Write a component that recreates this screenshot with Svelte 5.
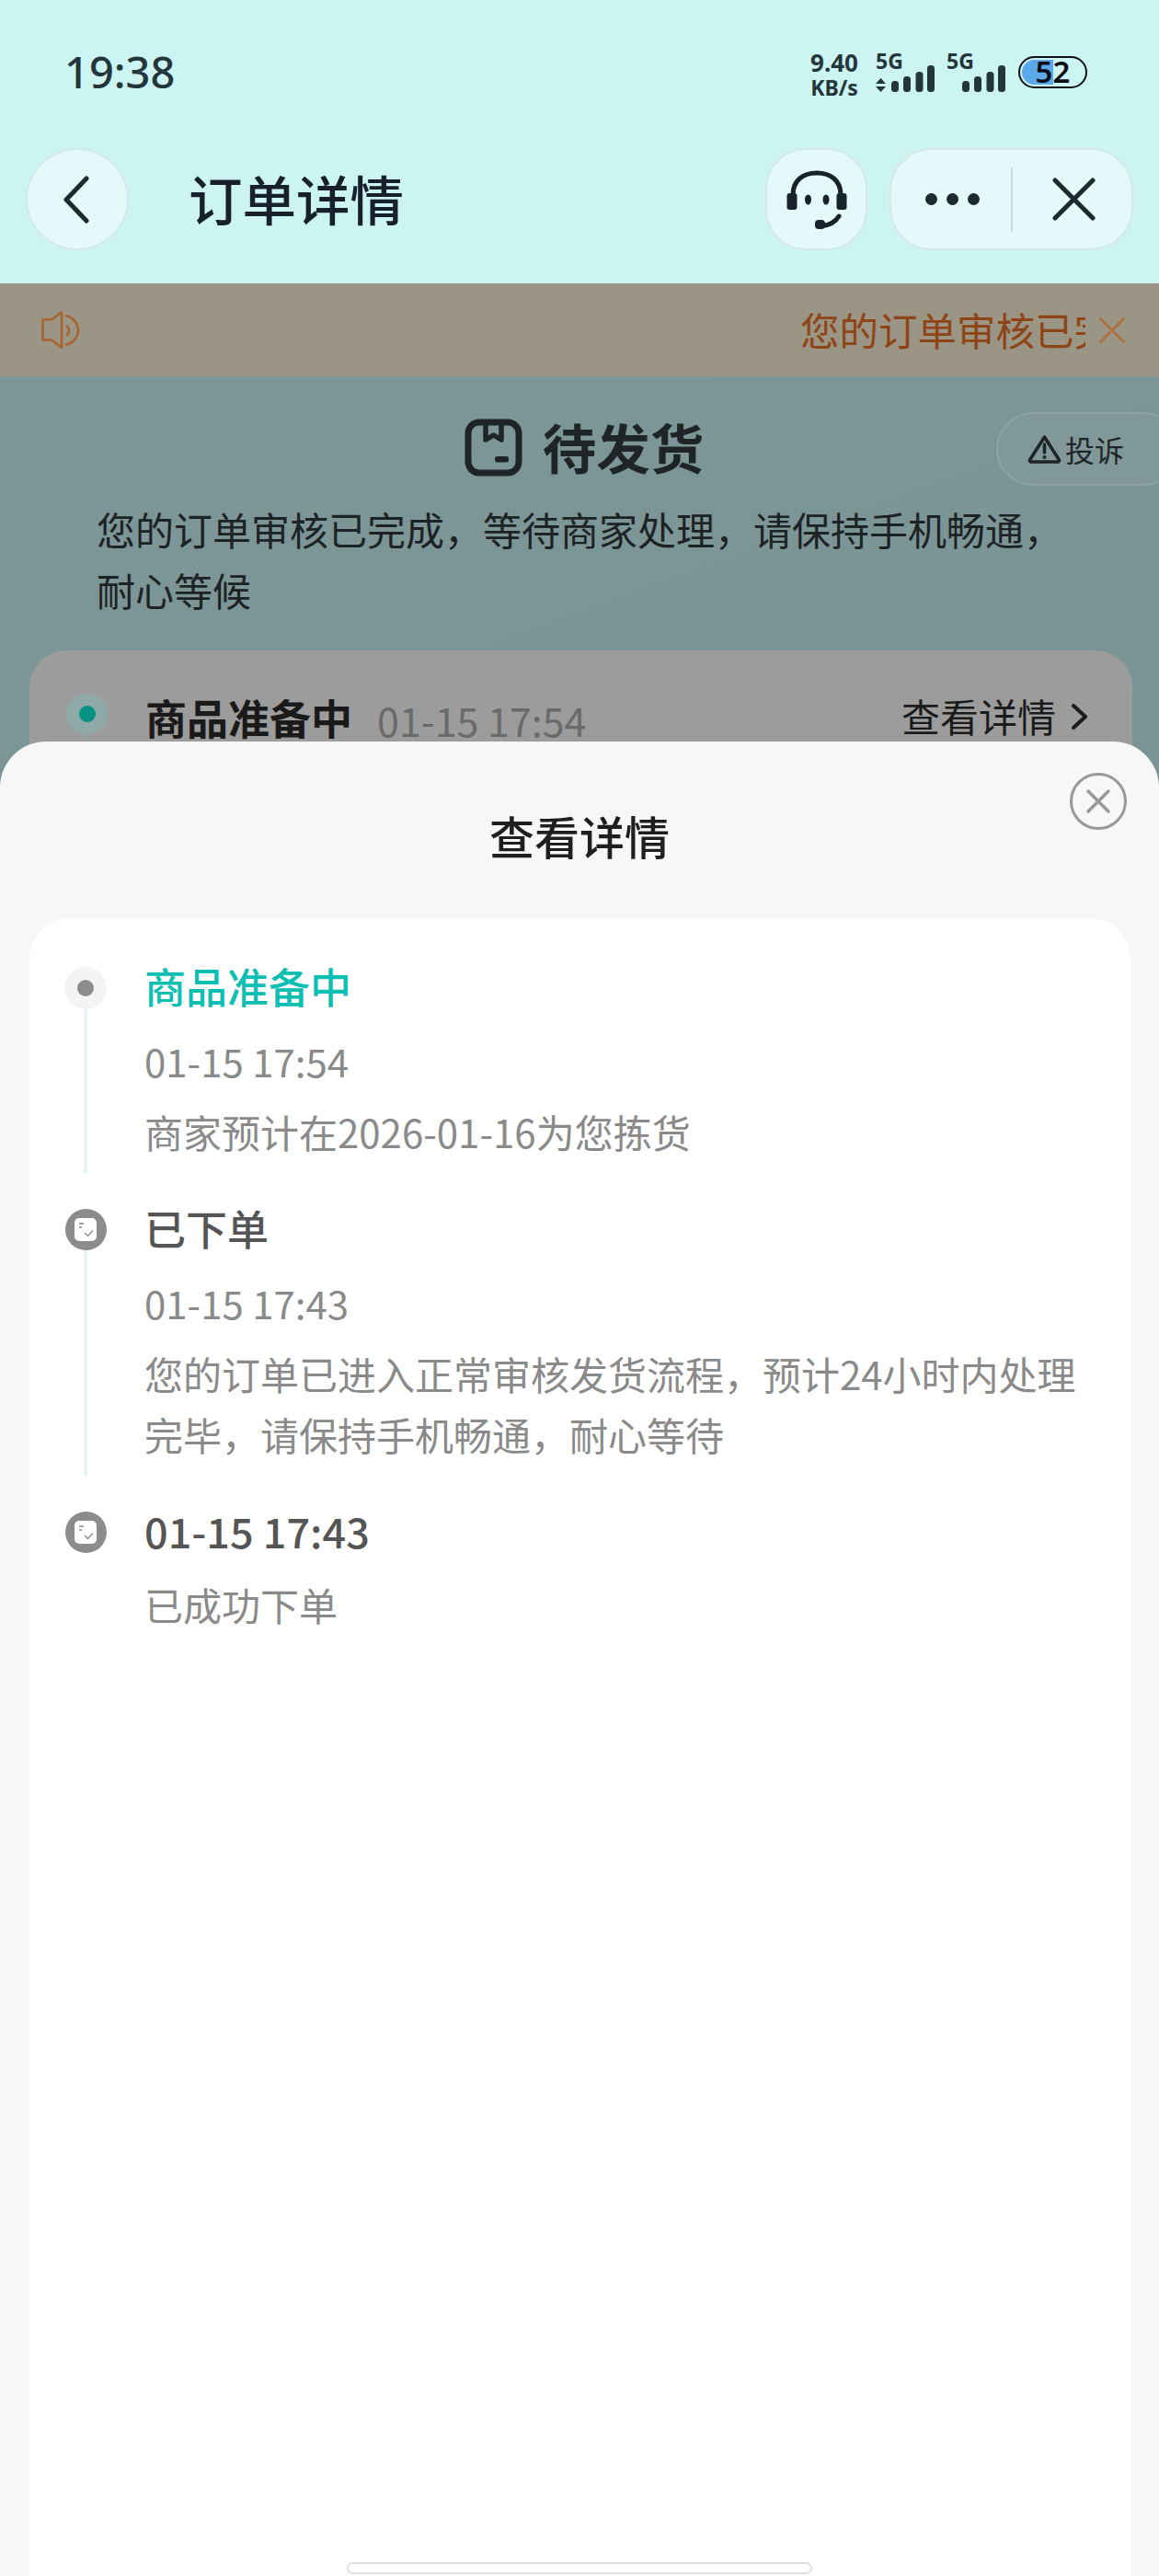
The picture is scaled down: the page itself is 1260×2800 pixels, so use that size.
<script>
  const steps = [
    { kind: 'dot', title: '商品准备中', date: '01-15 17:54', desc: '商家预计在2026-01-16为您拣货' },
    { kind: 'doc', title: '已下单', date: '01-15 17:43', desc: '您的订单已进入正常审核发货流程，预计24小时内处理完毕，请保持手机畅通，耐心等待' },
    { kind: 'doc', title: '01-15 17:43', desc: '已成功下单', last: true }
  ];
</script>

<div class="page">
  <header class="header">
    <div class="status">
      <span class="time">19:38</span>
      <div class="status-right">
        <div class="speed"><span class="speed-num">9.40</span><span class="speed-unit">KB/s</span></div>
        <div class="sim">
          <span class="five">5G</span>
          <svg class="arrows" width="11" height="15" viewBox="0 0 11 15"><path d="M5.5 0L11 6H0zM5.5 15L0 9h11z" fill="#24363a"/></svg>
          <svg class="bars" width="47" height="29" viewBox="0 0 47 29"><rect x="0" y="17" width="8" height="12" rx="3.5"/><rect x="13" y="12" width="8" height="17" rx="3.5"/><rect x="26.500" y="7" width="8" height="22" rx="3.500"/><rect x="39" y="0" width="8" height="29" rx="3.500"/></svg>
        </div>
        <div class="sim second">
          <span class="five">5G</span>
          <svg class="bars" width="47" height="29" viewBox="0 0 47 29"><rect x="0" y="17" width="8" height="12" rx="3.5"/><rect x="13" y="12" width="8" height="17" rx="3.5"/><rect x="26.500" y="7" width="8" height="22" rx="3.500"/><rect x="39" y="0" width="8" height="29" rx="3.500"/></svg>
        </div>
        <div class="battery"><span class="battery-fill"></span><span class="battery-num">52</span></div>
      </div>
    </div>
    <nav class="nav">
      <button class="round back" aria-label="返回">
        <svg width="30" height="52" viewBox="0 0 30 52" fill="none"><path d="M26 3L4 26l22 23" stroke="#1d2a30" stroke-width="5" stroke-linecap="round" stroke-linejoin="round"/></svg>
      </button>
      <h1 class="nav-title">订单详情</h1>
      <button class="round service" aria-label="客服">
        <svg width="66" height="64" viewBox="0 0 66 64" fill="none">
          <path d="M7 27C7 11 18 3 33 3s26 8 26 24" stroke="#18222c" stroke-width="5"/>
          <rect x="0.500" y="25" width="11" height="18" rx="3" fill="#18222c"/>
          <rect x="54.500" y="25" width="11" height="18" rx="3" fill="#18222c"/>
          <ellipse cx="23.500" cy="32" rx="3.500" ry="5.500" fill="#18222c"/>
          <ellipse cx="43" cy="32" rx="3.500" ry="5.500" fill="#18222c"/>
          <path d="M57 50c-4 7-11 10-20 11" stroke="#18222c" stroke-width="5" stroke-linecap="round"/>
          <rect x="31" y="54" width="11" height="10" rx="4" fill="#18222c"/>
        </svg>
      </button>
      <div class="capsule">
        <button class="cap-more" aria-label="更多"><i></i><i></i><i></i></button>
        <span class="cap-div"></span>
        <button class="cap-close" aria-label="关闭">
          <svg width="47" height="47" viewBox="0 0 47 47" fill="none"><path d="M3 3l41 41M44 3L3 44" stroke="#1d2a30" stroke-width="5" stroke-linecap="round"/></svg>
        </button>
      </div>
    </nav>
  </header>

  <div class="banner">
    <svg class="speaker" width="42" height="42" viewBox="0 0 42 42" fill="none" stroke="#a8622d" stroke-width="2.500" stroke-linejoin="round">
      <path d="M22 1.500L11 9.500H1.500v22H11L22 40z"/>
      <path d="M26 5c9 2 14 9 14 16s-5 14-14 16"/>
      <path d="M27 16c4 3 4 8 0 11"/>
    </svg>
    <div class="banner-text">您的订单审核已完成，等待商家处理</div>
    <svg class="banner-x" width="30" height="30" viewBox="0 0 30 30" fill="none"><path d="M1.500 1.500l27 27M28.500 1.500l-27 27" stroke="#ab7141" stroke-width="3"/></svg>
  </div>

  <main class="main">
    <div class="state">
      <svg width="63" height="63" viewBox="0 0 63 63" fill="none">
        <rect x="4" y="4" width="55" height="55" rx="12" stroke="#1f2526" stroke-width="7"/>
        <path d="M23 4v19l8.500-5 8.500 5V4" stroke="#1f2526" stroke-width="5.500" stroke-linejoin="round"/>
        <rect x="33" y="41" width="15" height="6.500" rx="2.500" fill="#1f2526"/>
      </svg>
      <span class="state-text">待发货</span>
    </div>
    <p class="state-desc">您的订单审核已完成，等待商家处理，请保持手机畅通，耐心等候</p>
    <button class="complain">
      <svg width="37" height="32" viewBox="0 0 37 32" fill="none">
        <path d="M18.500 3L34.500 28a1.500 1.500 0 0 1-1 2H3.500a1.500 1.500 0 0 1-1-2z" stroke="#1f2526" stroke-width="3.500" stroke-linejoin="round"/>
        <path d="M18.500 11v9" stroke="#1f2526" stroke-width="3.500" stroke-linecap="round"/>
        <circle cx="18.500" cy="25" r="2" fill="#1f2526"/>
      </svg>
      <span>投诉</span>
    </button>
    <section class="progress">
      <div class="progress-rail"><span class="progress-dot"><i></i></span><span class="progress-line"></span></div>
      <strong class="progress-title">商品准备中</strong>
      <span class="progress-date">01-15 17:54</span>
      <span class="progress-link">查看详情</span>
      <svg width="18" height="28" viewBox="0 0 18 28" fill="none"><path d="M2 2l13 12L2 26" stroke="#1b1b1b" stroke-width="4" stroke-linecap="round" stroke-linejoin="round"/></svg>
    </section>
  </main>

  <aside class="sheet">
    <h2 class="sheet-title">查看详情</h2>
    <button class="sheet-close" aria-label="关闭">
      <svg width="62" height="62" viewBox="0 0 62 62" fill="none">
        <circle cx="31" cy="31" r="29.500" stroke="#999" stroke-width="3"/>
        <path d="M20 20l22 22M42 20L20 42" stroke="#999" stroke-width="3.500" stroke-linecap="round"/>
      </svg>
    </button>
    <div class="timeline">
      {#each steps as s, i}
        <div class="step" class:last={s.last}>
          <div class="rail">
            {#if s.kind === 'dot'}
              <span class="node-dot"><i></i></span>
            {:else}
              <span class="node-doc">
                <svg width="24" height="25" viewBox="0 0 24 25" fill="none">
                  <rect width="24" height="25" rx="5" fill="#fff"/>
                  <path d="M5 6h5M5 10h3" stroke="#8c8c8c" stroke-width="1.500"/>
                  <path d="M11 16l3.500 3.500L20 13.500" stroke="#8c8c8c" stroke-width="1.300"/>
                </svg>
              </span>
            {/if}
            {#if !s.last}<span class="rail-line"></span>{/if}
          </div>
          <div class="step-body">
            <div class="step-title" class:active={i === 0} class:num={s.last}>{s.title}</div>
            {#if s.date}<div class="step-date">{s.date}</div>{/if}
            <div class="step-desc">{s.desc}</div>
          </div>
        </div>
      {/each}
    </div>
  </aside>
  <span class="home"></span>
</div>

<style>
  :global(body) { margin: 0; }
  button { border: 0; background: none; padding: 0; font: inherit; color: inherit; }
  h1, h2, p { margin: 0; }
  .page {
    width: 1260px; height: 2800px; position: relative; overflow: hidden;
    font-family: "Noto Sans CJK SC", "Noto Sans", sans-serif;
    background: linear-gradient(160deg, #7e9799 0%, #7a9394 45%, #738e8f 100%);
  }
  .header { height: 308px; background: #ccf4f3; box-sizing: border-box; padding-top: 52px; }
  .status { display: flex; justify-content: space-between; height: 52px; padding: 0 78px 0 70px; color: #24363a; }
  .time { font-family: "Noto Sans", sans-serif; font-size: 47px; font-weight: 500; line-height: 52px; }
  .status-right { display: flex; align-items: flex-start; padding-top: 2px; }
  .speed { display: flex; flex-direction: column; align-items: center; width: 54px; margin-right: 18px; font-family: "Noto Sans", sans-serif; }
  .speed-num { font-size: 26px; line-height: 28px; font-weight: 700; }
  .speed-unit { font-size: 23px; line-height: 22px; margin-top: 2px; font-weight: 700; }
  .sim { position: relative; width: 64px; height: 46px; margin-right: 13px; }
  .sim.second { margin-right: 14px; }
  .five { position: absolute; left: 0; top: 0; font-family: "Noto Sans", sans-serif; font-size: 23px; font-weight: 700; line-height: 24px; }
  .arrows { position: absolute; left: 0; top: 31px; }
  .bars { position: absolute; right: 0; top: 17px; fill: #24363a; }
  .battery { position: relative; width: 75px; height: 35px; margin-top: 7px; box-sizing: border-box; border: 2.500px solid #111; border-radius: 18px; display: flex; align-items: center; justify-content: center; }
  .battery-fill { position: absolute; left: 2px; top: 2px; bottom: 2px; width: 34px; background: #5aa9ea; border-radius: 14px 0 0 14px; }
  .battery-num { position: relative; font-family: "Noto Sans", sans-serif; font-size: 33px; font-weight: 600; line-height: 1; color: #0c0c14; margin-top: -2px; }
  .nav { display: flex; align-items: center; margin-top: 57px; padding-left: 28px; }
  .round, .capsule { height: 111px; box-sizing: border-box; background: #e3f9fa; border: 2px solid #d6e8e8; display: flex; align-items: center; justify-content: center; }
  .back { width: 112px; border-radius: 50%; }
  .back svg { margin-left: -2px; }
  .nav-title { font-size: 58.500px; font-weight: 500; color: #17202b; line-height: 70px; margin-left: 65px; padding-bottom: 4px; }
  .service { width: 111px; border-radius: 44px; margin-left: auto; }
  .capsule { width: 265px; margin-left: 24px; margin-right: 28px; border-radius: 46px; justify-content: flex-start; }
  .cap-more { display: flex; gap: 10px; margin-left: 35px; width: 62px; justify-content: center; flex: none; }
  .cap-more i { width: 13px; height: 13px; border-radius: 50%; background: #1d2a30; flex: none; }
  .cap-div { width: 2px; height: 70px; background: #cddddd; margin-left: 33px; flex: none; }
  .cap-close { display: flex; margin-left: 43px; flex: none; }
  .banner { height: 101px; background: #9a9585; display: flex; align-items: center; padding: 0 36px 0 45px; }
  .banner-text { margin-left: auto; width: 310px; overflow: hidden; white-space: nowrap; font-size: 42.500px; line-height: 60px; color: #8f4415; padding-bottom: 2px; }
  .banner-x { margin-left: 14px; flex: none; }
  .main { position: relative; padding-top: 46px; }
  .state { display: flex; align-items: center; justify-content: center; gap: 22px; padding-left: 10px; height: 62px; }
  .state-text { font-size: 58.500px; font-weight: 700; line-height: 62px; color: #1f2526; padding-bottom: 2px; }
  .state-desc { width: 1054px; margin: 25px 0 0 105px; font-size: 42px; line-height: 66px; color: #1d2324; }
  .complain { position: absolute; left: 1083px; top: 39px; width: 200px; height: 80px; box-sizing: border-box; border: 2px solid #8ea3a3; border-radius: 40px; background: #80989a; display: flex; align-items: center; gap: 4px; padding-left: 32px; font-size: 32px; color: #1f2526; }
  .progress { margin: 33px 29px 0 32px; height: 220px; box-sizing: border-box; background: #9c9c9c; border-radius: 40px 40px 0 0; padding: 47px 48px 0 40px; display: flex; align-items: flex-start; }
  .progress-rail { display: flex; flex-direction: column; align-items: center; flex: none; }
  .progress-dot { width: 45px; height: 44px; border-radius: 50%; background: #8fa9a9; display: flex; align-items: center; justify-content: center; flex: none; }
  .progress-dot i { width: 18px; height: 18px; border-radius: 50%; background: #079286; }
  .progress-line { width: 3px; height: 20px; background: #8fa3a3; }
  .progress-title { font-size: 45px; font-weight: 700; line-height: 56px; color: #1a1a1a; margin-left: 41px; margin-top: -2px; }
  .progress-date { font-size: 43px; line-height: 56px; color: #6a6a6a; margin-left: 27px; }
  .progress-link { font-size: 42px; line-height: 56px; color: #1b1b1b; margin-left: auto; margin-top: -4px; }
  .progress svg { margin: 11px 0 0 17px; flex: none; }
  .sheet { position: absolute; left: 0; right: 0; top: 806px; bottom: 0; background: #f7f7f7; border-radius: 50px 50px 0 0; padding-top: 192px; }
  .sheet-title { position: absolute; top: 70px; left: 0; right: 0; text-align: center; font-size: 49px; font-weight: 500; line-height: 64px; color: #1f1f1f; }
  .sheet-close { position: absolute; right: 35px; top: 34px; display: flex; }
  .timeline { margin: 0 31px 0 32px; height: 1802px; box-sizing: border-box; background: #fff; border-radius: 44px 44px 0 0; padding: 53px 40px 0 38px; }
  .step { display: flex; padding-bottom: 39px; }
  .step.last { padding-bottom: 0; }
  .rail { width: 46px; display: flex; flex-direction: column; align-items: center; flex: none; margin-right: 41px; }
  .node-dot { width: 46px; height: 46px; border-radius: 50%; background: #f4f4f4; display: flex; align-items: center; justify-content: center; flex: none; }
  .node-dot i { width: 18px; height: 18px; border-radius: 50%; background: #8c8c8c; }
  .node-doc { width: 45px; height: 45px; border-radius: 50%; background: #8c8c8c; display: flex; align-items: center; justify-content: center; flex: none; }
  .rail-line { width: 4px; flex: 1; background: #e6f6f8; }
  .step-body { flex: 1; margin-top: -2px; padding-bottom: 12px; }
  .step-title { font-size: 45px; line-height: 46px; color: #555; font-weight: 500; }
  .step-title.active { color: #0cbfb2; }
  .step-date { margin-top: 25px; font-size: 42px; line-height: 66px; color: #8a8a8a; }
  .step-desc { margin-top: 11px; font-size: 42px; line-height: 66px; color: #8a8a8a; }
  .step.last .step-desc { margin-top: 24px; }
  .home { position: absolute; left: 377px; top: 2785px; width: 506px; height: 13px; box-sizing: border-box; border: 2px solid #e0e0e0; border-radius: 7px; background: #fff; }
</style>
